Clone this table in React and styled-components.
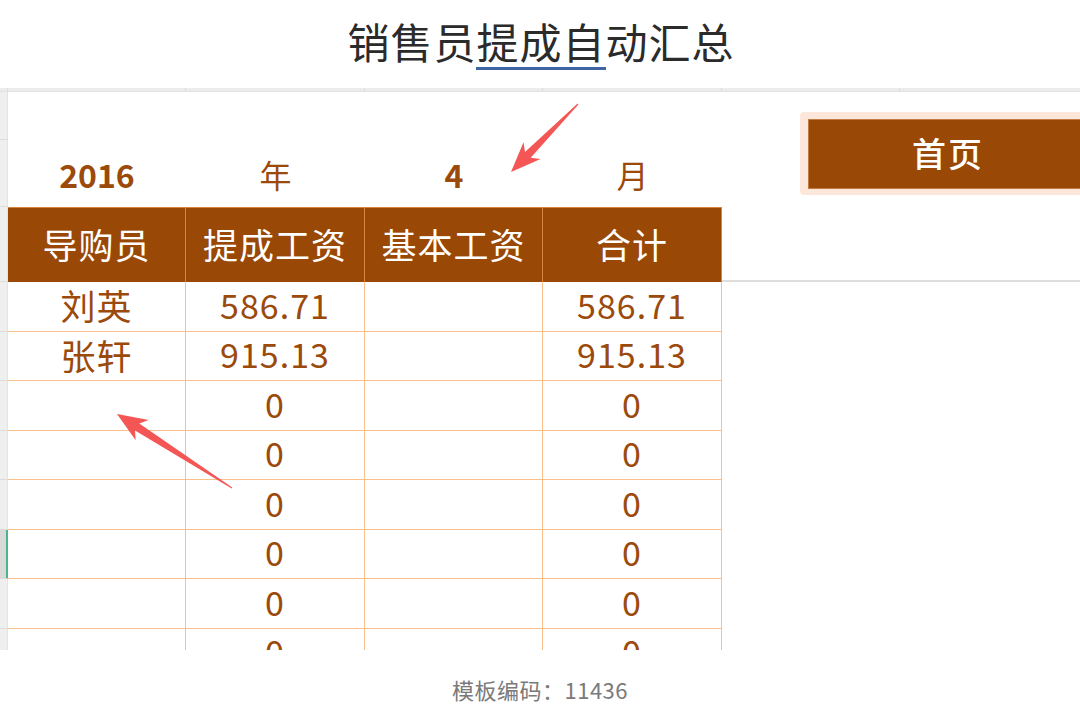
import styled, { createGlobalStyle } from "styled-components";

const GlobalStyle = createGlobalStyle`
  html, body {
    margin: 0;
    padding: 0;
    background: #ffffff;
  }
  body {
    font-family: "Noto Sans CJK SC", "Noto Sans", sans-serif;
  }
`;

const rows = [
  { name: "刘英", commission: "586.71", base: "", total: "586.71" },
  { name: "张轩", commission: "915.13", base: "", total: "915.13" },
  { name: "", commission: "0", base: "", total: "0" },
  { name: "", commission: "0", base: "", total: "0" },
  { name: "", commission: "0", base: "", total: "0" },
  { name: "", commission: "0", base: "", total: "0" },
  { name: "", commission: "0", base: "", total: "0" },
  { name: "", commission: "0", base: "", total: "0" },
];

const headers = ["导购员", "提成工资", "基本工资", "合计"];

// polygon for a tapered annotation arrow, from tail to tip
function arrowPoints(tail, tip, headLen = 30, headHalf = 12, neckHalf = 4) {
  const dx = tip[0] - tail[0];
  const dy = tip[1] - tail[1];
  const len = Math.hypot(dx, dy);
  const ux = dx / len;
  const uy = dy / len;
  const nx = -uy;
  const ny = ux;
  const neck = [tip[0] - ux * headLen, tip[1] - uy * headLen];
  const inner = [tip[0] - ux * (headLen - 6), tip[1] - uy * (headLen - 6)];
  const p = (pt, k) => `${(pt[0] + nx * k).toFixed(1)},${(pt[1] + ny * k).toFixed(1)}`;
  return [
    p(tail, 0.6),
    p(inner, neckHalf),
    p(neck, headHalf),
    `${tip[0]},${tip[1]}`,
    p(neck, -headHalf),
    p(inner, -neckHalf),
    p(tail, -0.6),
  ].join(" ");
}

export default function App() {
  return (
    <Page>
      <GlobalStyle />
      <TitleBar>
        <Title>
          销售员<Marked>提成自</Marked>动汇总
        </Title>
      </TitleBar>

      <Sheet>
        <ColStrip>
          <ColTick />
          <ColTick />
          <ColTick />
          <ColTick />
          <ColTick />
          <ColTick />
        </ColStrip>

        <SheetRow $h={48}>
          <RowHead />
          <Blank />
        </SheetRow>

        <SheetRow $h={67}>
          <RowHead />
          <PeriodCell $bold>2016</PeriodCell>
          <PeriodCell>年</PeriodCell>
          <PeriodCell $bold>4</PeriodCell>
          <PeriodCell>月</PeriodCell>
          <Blank />
        </SheetRow>

        <SheetRow $h={75}>
          <RowHead />
          {headers.map((h) => (
            <HeadCell key={h}>{h}</HeadCell>
          ))}
          <Blank $line />
        </SheetRow>

        {rows.map((r, i) => (
          <SheetRow key={i} $h={49.5}>
            <RowHead $active={i === 5} />
            <DataCell>{r.name}</DataCell>
            <DataCell $num>{r.commission}</DataCell>
            <DataCell $num>{r.base}</DataCell>
            <DataCell $num>{r.total}</DataCell>
            <Blank />
          </SheetRow>
        ))}

        <HomeButton>
          <HomeInner>首页</HomeInner>
        </HomeButton>

        <Annotations viewBox="0 0 1080 562">
          <polygon points={arrowPoints([578, 16], [511, 84])} fill="#f45656" />
          <polygon points={arrowPoints([232, 400], [117, 326])} fill="#f45656" />
        </Annotations>
      </Sheet>

      <Footer>模板编码：11436</Footer>
    </Page>
  );
}

const Page = styled.div`
  width: 1080px;
  height: 713px;
  display: flex;
  flex-direction: column;
  background: #ffffff;
  overflow: hidden;
`;

const TitleBar = styled.div`
  height: 88px;
  display: flex;
  justify-content: center;
  align-items: flex-start;
`;

const Title = styled.h1`
  margin: 13px 0 0 2px;
  font-size: 42px;
  font-weight: 400;
  letter-spacing: 1px;
  color: #2b2b2b;
  line-height: 56px;
`;

const Marked = styled.span`
  display: inline-block;
  border-bottom: 3px solid #3f66a3;
  line-height: 52px;
`;

const Sheet = styled.div`
  position: relative;
  height: 562px;
  display: flex;
  flex-direction: column;
  overflow: hidden;
`;

const ColStrip = styled.div`
  height: 4px;
  flex: none;
  display: grid;
  grid-template-columns: 8px 178px 179px 178px 179px 178px 1fr;
  background: #ececec;
  border-bottom: 1px solid #e2e2e2;
  box-sizing: border-box;
`;

const ColTick = styled.div`
  border-right: 1px solid #dcdcdc;
`;

const SheetRow = styled.div`
  height: ${(p) => p.$h}px;
  flex: none;
  display: grid;
  grid-template-columns: 8px 178px 179px 178px 179px 1fr;
  grid-template-rows: 100%;
  line-height: 1.2;
`;

const RowHead = styled.div`
  background: ${(p) => (p.$active ? "#d9d9d9" : "#efefef")};
  border-bottom: 1px solid #dadada;
  border-right: 1px solid ${(p) => (p.$active ? "#4cb58a" : "#e4e4e4")};
  box-shadow: ${(p) => (p.$active ? "inset -1px 0 0 #4cb58a" : "none")};
  box-sizing: border-box;
`;

const Blank = styled.div`
  background: #ffffff;
  border-bottom: ${(p) => (p.$line ? "2px solid #dddddd" : "none")};
  box-sizing: border-box;
`;

const PeriodCell = styled.div`
  display: flex;
  align-items: flex-end;
  justify-content: center;
  padding-bottom: 17px;
  box-sizing: border-box;
  font-size: 32px;
  font-weight: ${(p) => (p.$bold ? 700 : 400)};
  color: #9b4a0b;
  line-height: 1;
`;

const HeadCell = styled.div`
  display: flex;
  align-items: center;
  justify-content: center;
  background: #994806;
  color: #ffffff;
  font-size: 35px;
  letter-spacing: 1px;
  border-right: 1px solid #d9843f;
  border-top: 1px solid #d9843f;
  box-sizing: border-box;
  padding-bottom: 2px;
`;

const DataCell = styled.div`
  display: flex;
  align-items: center;
  justify-content: center;
  font-size: ${(p) => (p.$num ? "34px" : "35px")};
  color: #9b4a0b;
  letter-spacing: 1px;
  border-right: 1px solid #fbc08a;
  border-bottom: 1px solid #fbc08a;
  box-sizing: border-box;
  padding-bottom: 2px;
  overflow: visible;
`;

const HomeButton = styled.div`
  position: absolute;
  left: 800px;
  top: 24px;
  width: 300px;
  height: 83px;
  padding: 7px 0 0 8px;
  box-sizing: border-box;
  background: #fde7da;
  border-radius: 4px;
`;

const HomeInner = styled.div`
  height: 70px;
  display: flex;
  align-items: center;
  justify-content: flex-start;
  padding-left: 103px;
  padding-bottom: 4px;
  background: #994806;
  color: #ffffff;
  font-size: 34px;
  font-weight: 500;
  letter-spacing: 2px;
  border: 1px solid #c37a45;
  box-sizing: border-box;
`;

const Annotations = styled.svg`
  position: absolute;
  left: 0;
  top: 0;
  width: 1080px;
  height: 562px;
  pointer-events: none;
`;

const Footer = styled.div`
  height: 63px;
  display: flex;
  align-items: center;
  justify-content: center;
  font-size: 22px;
  letter-spacing: 0.5px;
  color: #7a7a7a;
  padding-top: 14px;
  box-sizing: border-box;
`;
